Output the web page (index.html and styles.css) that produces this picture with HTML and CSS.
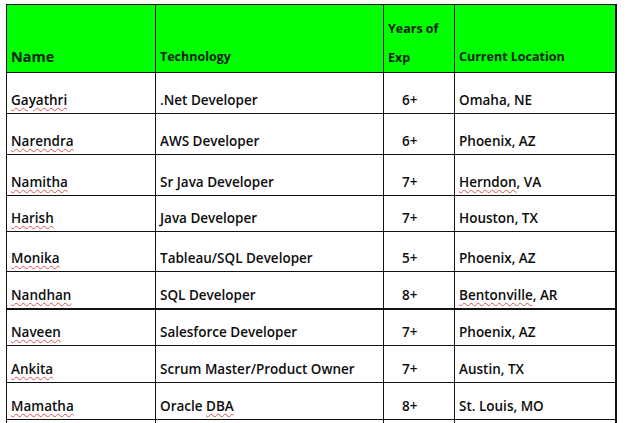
FILE: index.html
```html
<!DOCTYPE html>
<html>
<head>
<meta charset="utf-8">
<link rel="stylesheet" href="styles.css">
</head>
<body>
<table class="grid">
  <colgroup>
    <col class="c-name"><col class="c-tech"><col class="c-exp"><col class="c-loc">
  </colgroup>
  <tr class="head">
    <th class="h-name">Name</th>
    <th>Technology</th>
    <th class="h-exp">Years of<br>Exp</th>
    <th>Current Location</th>
  </tr>
  <tr class="r41"><td><span class="sp">Gayathri</span></td><td>.Net Developer</td><td class="exp">6+</td><td>Omaha, NE</td></tr>
  <tr class="r41"><td><span class="sp">Narendra</span></td><td>AWS Developer</td><td class="exp">6+</td><td>Phoenix, AZ</td></tr>
  <tr class="r41"><td><span class="sp">Namitha</span></td><td>Sr Java Developer</td><td class="exp">7+</td><td><span class="sp">Herndon</span>, VA</td></tr>
  <tr class="r36"><td><span class="sp">Harish</span></td><td>Java Developer</td><td class="exp">7+</td><td>Houston, TX</td></tr>
  <tr class="r40"><td><span class="sp">Monika</span></td><td>Tableau/SQL Developer</td><td class="exp">5+</td><td>Phoenix, AZ</td></tr>
  <tr class="r37 thick"><td><span class="sp">Nandhan</span></td><td>SQL Developer</td><td class="exp">8+</td><td><span class="sp">Bentonville</span>, AR</td></tr>
  <tr class="r37"><td><span class="sp">Naveen</span></td><td>Salesforce Developer</td><td class="exp">7+</td><td>Phoenix, AZ</td></tr>
  <tr class="r37"><td><span class="sp">Ankita</span></td><td>Scrum Master/Product Owner</td><td class="exp">7+</td><td>Austin, TX</td></tr>
  <tr class="r37"><td><span class="sp">Mamatha</span></td><td>Oracle <span class="sp">DBA</span></td><td class="exp">8+</td><td>St. Louis, MO</td></tr>
  <tr class="r37"><td></td><td></td><td></td><td></td></tr>
</table>
</body>
</html>
```
FILE: styles.css
```css
html, body {
  margin: 0;
  padding: 0;
  background: #ffffff;
  overflow: hidden;
}
body {
  padding: 4px 0 0 6px;
  font-family: "Open Sans", "Noto Sans", sans-serif;
  color: #0d0d0d;
}
.grid {
  border-collapse: collapse;
  table-layout: fixed;
  width: 609px;
}
.c-name { width: 149px; }
.c-tech { width: 228px; }
.c-exp { width: 71px; }
.c-loc { width: 161px; }
.grid th, .grid td {
  border: 1px solid #111;
  text-align: left;
  vertical-align: bottom;
  padding: 0 0 4px 4px;
  font-size: 13.5px;
  font-weight: 600;
  line-height: 17px;
  white-space: nowrap;
  overflow: hidden;
}
.grid td:last-child, .grid th:last-child {
  border-right: 2px solid #111;
}
.head { height: 68px; }
.head th {
  background: #00ff00;
  color: #0c220c;
  padding-bottom: 7px;
  font-size: 12.5px;
  font-weight: 700;
}
.head .h-name {
  font-size: 14.5px;
}
.head .h-exp {
  line-height: 29px;
  padding-bottom: 0;
}
.grid td.exp {
  padding-left: 18px;
}
.r41 { height: 41px; }
.r40 { height: 40px; }
.r37 { height: 37px; }
.r36 { height: 36px; }
.thick td { border-bottom: 2px solid #111; }
.sp {
  text-decoration: underline wavy #e05050;
  text-decoration-thickness: 1px;
  text-underline-offset: 2px;
}
```
